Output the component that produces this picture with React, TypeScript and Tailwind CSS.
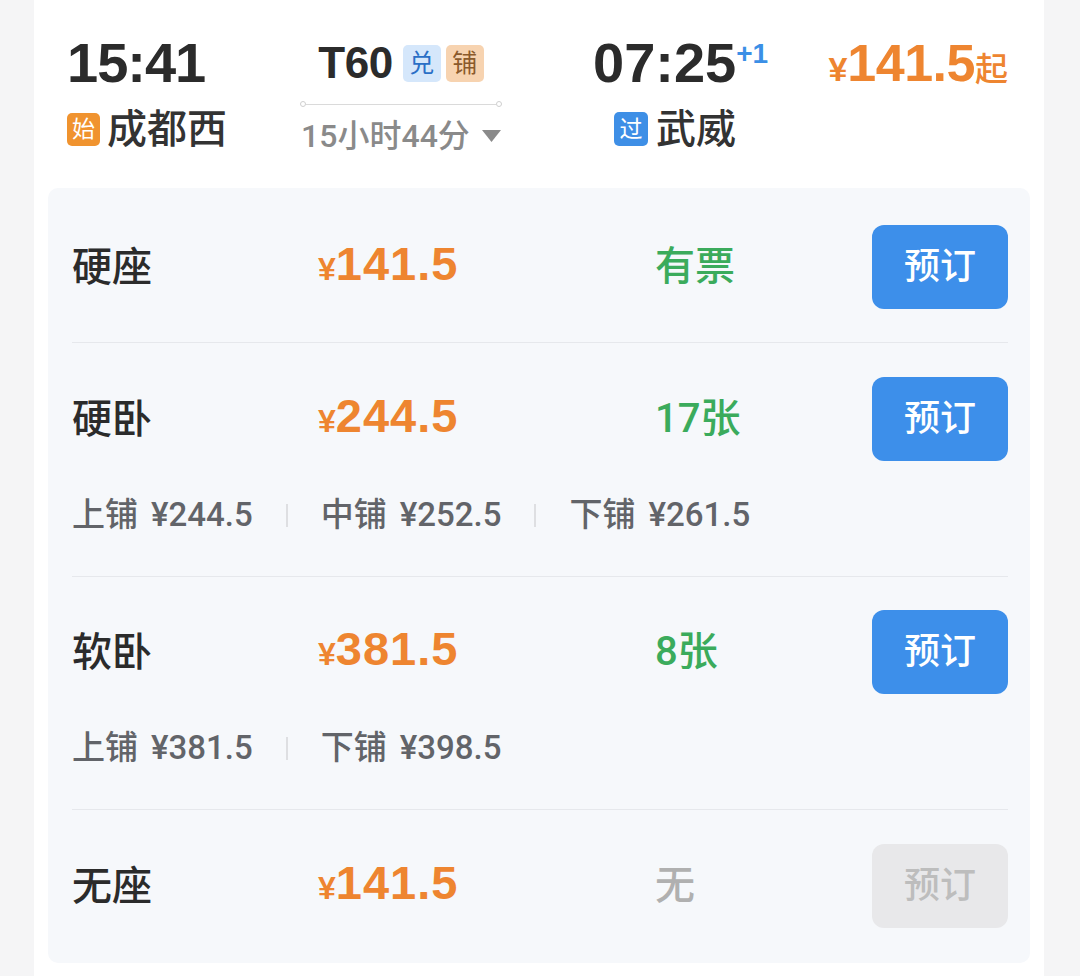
import React from "react";

const ORANGE = "text-[#ee8530]";

function Badge({ ch, cls }: { ch: string; cls: string }) {
  return (
    <span className={`flex items-center justify-center rounded-[5px] text-[23px] leading-none ${cls}`}>{ch}</span>
  );
}

function Header() {
  return (
    <div className="h-[188px] flex pt-[35px] pl-[19px] pr-[22px] shrink-0">
      {/* departure */}
      <div className="w-[233px] flex flex-col">
        <div className="h-[56px] text-[56px] leading-[56px] font-bold text-[#2b2b2b] tracking-[-1px]">15:41</div>
        <div className="mt-[18px] h-[40px] flex items-center gap-[7px]">
          <Badge ch="始" cls="w-[33px] h-[33px] bg-[#f0932f] text-white" />
          <span className="text-[40px] leading-[40px] font-medium text-[#333]">成都西</span>
        </div>
      </div>
      {/* train */}
      <div className="w-[202px] flex flex-col items-center">
        <div className="h-[40px] mt-[8px] flex items-center">
          <span className="text-[44px] leading-[40px] font-bold text-[#2b2b2b] tracking-[-0.5px]">T60</span>
          <Badge ch="兑" cls="ml-[10px] w-[38px] h-[37px] bg-[#d5e7fb] text-[#2a6fc6] text-[25px]" />
          <Badge ch="铺" cls="ml-[5px] w-[38px] h-[37px] bg-[#f7d3b0] text-[#8b5a2b] text-[25px]" />
        </div>
        <div className="mt-[18px] w-full flex items-center">
          <span className="w-[6px] h-[6px] rounded-full border border-[#cfcfcf] bg-white" />
          <span className="flex-1 h-[1px] bg-[#dadada]" />
          <span className="w-[6px] h-[6px] rounded-full border border-[#cfcfcf] bg-white" />
        </div>
        <div className="mt-[12px] h-[34px] flex items-center text-[32px] leading-[34px] text-[#8a8a8a] font-medium font-['Roboto','Noto_Sans_CJK_SC',sans-serif]">
          <span>15小时44分</span>
          <svg className="ml-[12px]" width="19" height="12" viewBox="0 0 19 12">
            <path d="M0 0 H19 L9.5 12 Z" fill="#8a8a8a" />
          </svg>
        </div>
      </div>
      {/* arrival */}
      <div className="ml-[91px] flex flex-col">
        <div className="h-[56px] flex items-start">
          <span className="text-[56px] leading-[56px] font-bold text-[#2b2b2b] tracking-[0px]">07:25</span>
          <span className="text-[28px] leading-[28px] mt-[5px] font-bold text-[#3b8fe6]">+1</span>
        </div>
        <div className="mt-[18px] h-[40px] flex items-center gap-[8px] pl-[21px]">
          <Badge ch="过" cls="w-[34px] h-[34px] bg-[#3e8fe6] text-white" />
          <span className="text-[40px] leading-[40px] font-medium text-[#333]">武威</span>
        </div>
      </div>
      {/* price */}
      <div className="ml-auto h-[56px] flex items-baseline">
        <span className={`text-[34px] font-bold ${ORANGE}`}>¥</span>
        <span className={`text-[52px] leading-[56px] font-bold ${ORANGE} tracking-[-0.5px]`}>141.5</span>
        <span className={`text-[33px] font-medium ${ORANGE}`}>起</span>
      </div>
    </div>
  );
}

type Sub = [string, string][];

function Row({
  name,
  price,
  status,
  statusCls,
  disabled,
  subs,
  pt,
  pb,
  last,
}: {
  name: string;
  price: string;
  status: string;
  statusCls: string;
  disabled?: boolean;
  subs?: Sub;
  pt: string;
  pb: string;
  last?: boolean;
}) {
  return (
    <div className={`${pt} ${pb} ${last ? "" : "border-b border-[#e6e8ec]"}`}>
      <div className="h-[84px] flex items-center">
        <div className="w-[246px] text-[40px] leading-[40px] font-medium text-[#2b2b2b]">{name}</div>
        <div className="w-[337px] flex items-baseline">
          <span className={`text-[32px] font-bold ${ORANGE}`}>¥</span>
          <span className={`text-[47px] leading-[46px] font-bold ${ORANGE} tracking-[1px]`}>{price}</span>
        </div>
        <div
          className={`text-[40px] leading-[40px] font-medium font-['Roboto','Noto_Sans_CJK_SC',sans-serif] ${statusCls}`}
        >
          {status}
        </div>
        <button
          className={`ml-auto w-[136px] h-[84px] rounded-[12px] text-[36px] font-medium ${
            disabled ? "bg-[#e8e8ea] text-[#bdbdbd]" : "bg-[#3d8fea] text-white"
          }`}
        >
          预订
        </button>
      </div>
      {subs && (
        <div className="mt-[35px] mb-[8px] h-[38px] flex items-center text-[33px] leading-[38px] font-medium text-[#626469] font-['Roboto','Noto_Sans_CJK_SC',sans-serif]">
          {subs.map(([label, p], i) => (
            <React.Fragment key={i}>
              {i > 0 && <span className="mx-[33px] w-[2px] h-[23px] bg-[#dedfe2]" />}
              <span className="flex items-center gap-[13px]">
                <span>{label}</span>
                <span>{p}</span>
              </span>
            </React.Fragment>
          ))}
        </div>
      )}
    </div>
  );
}

export default function App() {
  return (
    <div className="w-[1080px] h-[976px] bg-[#f5f5f6] pl-[34px] pr-[36px] overflow-hidden font-['Liberation_Sans','Noto_Sans_CJK_SC',sans-serif]">
      <div className="h-full bg-white px-[14px] flex flex-col">
        <Header />
        <div className="bg-[#f6f8fb] rounded-[10px] pl-[24px] pr-[22px]">
          <Row name="硬座" price="141.5" status="有票" statusCls="text-[#3bab5c]" pt="pt-[37px]" pb="pb-[33px]" />
          <Row
            name="硬卧"
            price="244.5"
            status="17张"
            statusCls="text-[#3bab5c]"
            subs={[
              ["上铺", "¥244.5"],
              ["中铺", "¥252.5"],
              ["下铺", "¥261.5"],
            ]}
            pt="pt-[34px]"
            pb="pb-[34px]"
          />
          <Row
            name="软卧"
            price="381.5"
            status="8张"
            statusCls="text-[#3bab5c]"
            subs={[
              ["上铺", "¥381.5"],
              ["下铺", "¥398.5"],
            ]}
            pt="pt-[33px]"
            pb="pb-[34px]"
          />
          <Row name="无座" price="141.5" status="无" statusCls="text-[#b0b0b0]" disabled pt="pt-[34px]" pb="pb-[35px]" last />
        </div>
      </div>
    </div>
  );
}
